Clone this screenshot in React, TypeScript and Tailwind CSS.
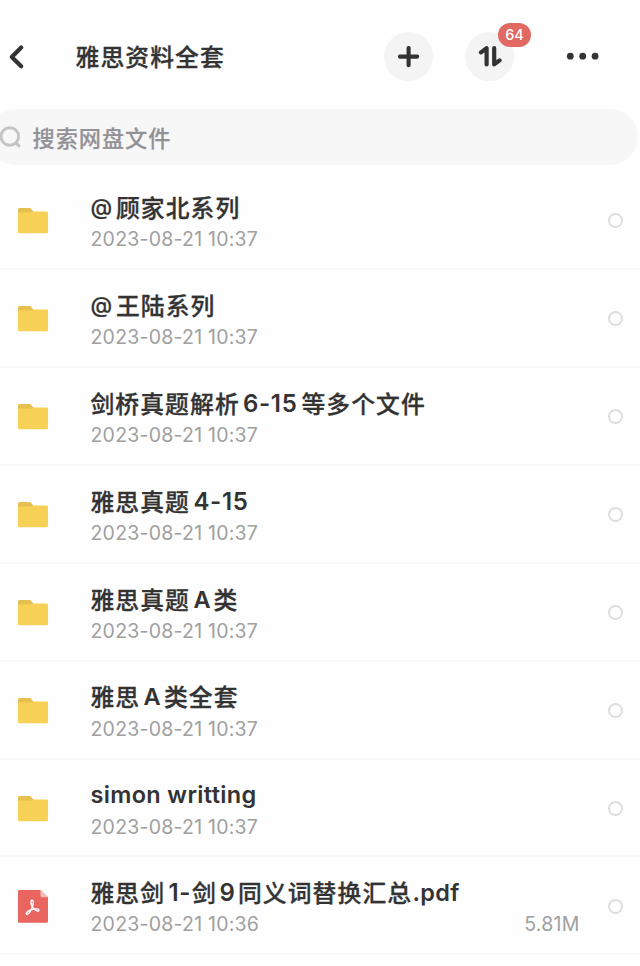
import React from "react";

type Run = { t: string; cjk?: boolean; at?: boolean; digits?: boolean; w: number };
type Item = { runs: Run[]; date: string; size?: string; pdf?: boolean };

const D = "2023-08-21 10:37";

const items: Item[] = [
  { runs: [{ t: "@", at: true, w: 25.5 }, { t: "顾家北系列", cjk: true, w: 126 }], date: D },
  { runs: [{ t: "@", at: true, w: 25.5 }, { t: "王陆系列", cjk: true, w: 101 }], date: D },
  {
    runs: [
      { t: "剑桥真题解析", cjk: true, w: 152.5 },
      { t: "6-15", digits: true, w: 58.5 },
      { t: "等多个文件", cjk: true, w: 126 },
    ],
    date: D,
  },
  { runs: [{ t: "雅思真题", cjk: true, w: 103 }, { t: "4-15", digits: true, w: 56 }], date: D },
  {
    runs: [
      { t: "雅思真题", cjk: true, w: 103 },
      { t: "A", w: 20 },
      { t: "类", cjk: true, w: 25 },
    ],
    date: D,
  },
  {
    runs: [
      { t: "雅思", cjk: true, w: 53 },
      { t: "A", w: 20.5 },
      { t: "类全套", cjk: true, w: 76 },
    ],
    date: D,
  },
  { runs: [{ t: "simon writting", w: 170 }], date: D },
  {
    runs: [
      { t: "雅思剑", cjk: true, w: 78 },
      { t: "1-", digits: true, w: 23.5 },
      { t: "剑", cjk: true, w: 27.5 },
      { t: "9", digits: true, w: 18.5 },
      { t: "同义词替换汇总", cjk: true, w: 174.5 },
      { t: ".pdf", w: 50 },
    ],
    date: "2023-08-21 10:36",
    size: "5.81M",
    pdf: true,
  },
];

function FolderIcon() {
  return (
    <svg width="30" height="26" viewBox="0 0 30 26">
      <path d="M0 10V1.5Q0 0 1.5 0H11.5Q12.5 0 13.2 .8L16.5 5V10Z" fill="#e6bf50" />
      <path d="M0 5.4Q0 4.6 1 4.6H12.5Q13.3 4.6 13.9 4L14.5 3.4H28.7Q30 3.4 30 4.7V24Q30 25.3 28.7 25.3H1.3Q0 25.3 0 24Z" fill="#f6d155" />
    </svg>
  );
}

function PdfIcon() {
  return (
    <svg width="30" height="33" viewBox="0 0 30 33">
      <path d="M1.3 0H22.5L30 7.2V31.4Q30 32.7 28.7 32.7H1.3Q0 32.7 0 31.4V1.3Q0 0 1.3 0Z" fill="#e9655f" />
      <path d="M22.5 0L30 7.2H23.6Q22.5 7.2 22.5 6.1Z" fill="#f5bcb8" />
      <path
        d="M14.2 17C12.8 13.5 12.4 10.3 14 10.3C15.7 10.3 15.6 14 14.3 17.1C13 20.5 10.6 24.7 8.8 24.5C7.2 23.9 9.6 21 12.5 20C15 19 20.9 18.1 21 20.2C20.9 22.4 16.4 20.2 14.2 17Z"
        fill="none"
        stroke="#fff"
        strokeWidth="1.4"
        strokeLinejoin="round"
      />
    </svg>
  );
}

function runClass(r: Run) {
  if (r.cjk)
    return "block -mt-[2px] font-['Noto_Sans_CJK_SC',sans-serif] text-[23.8px] leading-8 font-medium tracking-[1.1px] [-webkit-text-stroke:0.3px_#333]";
  if (r.at) return "block -mt-px font-['Inter',sans-serif] text-[22px] leading-8 font-medium [-webkit-text-stroke:0.2px_#333]";
  if (r.digits) return "block font-['Inter',sans-serif] text-[24px] leading-8 font-semibold tracking-[0.7px]";
  return "block font-['Inter',sans-serif] text-[23.5px] leading-8 font-semibold tracking-[0.35px]";
}

function Row({ item }: { item: Item }) {
  return (
    <li className="flex h-[97.9px] border-b-2 border-[#f8f8f8] pl-[18px]">
      <div className={item.pdf ? "w-[73px] pt-[32.4px]" : "w-[73px] pt-[36px]"}>
        {item.pdf ? <PdfIcon /> : <FolderIcon />}
      </div>
      <div className="flex-1 pt-[19.8px]">
        <div className="-ml-[0.6px] flex h-8 items-center whitespace-nowrap text-[#333]">
          {item.runs.map((r, i) => (
            <span key={i} className={runClass(r)} style={{ width: r.w }}>
              {r.t}
            </span>
          ))}
        </div>
        <div className="-ml-[0.5px] flex h-[31.6px] items-center justify-between font-['Inter',sans-serif] text-[19.5px] tracking-[0.22px] text-[#a0a0a0]">
          <span>{item.date}</span>
          <span>{item.size}</span>
        </div>
      </div>
      <div className="flex w-[60.5px] justify-end pt-[41.2px] pr-[17px]">
        <div className="size-[15px] rounded-full border-2 border-[#dedede]" />
      </div>
    </li>
  );
}

export default function App() {
  return (
    <main className="h-[966px] w-[640px] overflow-hidden bg-[#fefefe]">
      <header className="flex h-[109px] items-start">
        <svg className="mt-[44px] ml-[8px] shrink-0" width="18" height="26" viewBox="0 0 18 26">
          <path d="M13.2 3.5L3.8 13L13.2 22.3" fill="none" stroke="#333" strokeWidth="4.2" strokeLinecap="round" strokeLinejoin="round" />
        </svg>
        <h1 className="mt-[40px] ml-[49.5px] w-[308.5px] font-['Noto_Sans_CJK_SC',sans-serif] text-[23.8px] leading-8 font-medium tracking-[1.1px] text-[#333] [-webkit-text-stroke:0.3px_#333]">
          雅思资料全套
        </h1>
        <button className="mt-[32px] flex size-[49px] items-center justify-center rounded-full bg-[#f4f4f4]">
          <svg width="22" height="22" viewBox="0 0 22 22">
            <path d="M10.6 2V19.2M2 10.6H19.2" stroke="#333" strokeWidth="4.1" strokeLinecap="round" />
          </svg>
        </button>
        <button className="relative mt-[32px] ml-[32px] flex size-[49px] items-center justify-center rounded-full bg-[#f4f4f4]">
          <svg width="24" height="22" viewBox="0 0 24 22">
            <path d="M3 6.4L8.6 2.2V18.4M16.2 2.2V18.4L21.6 14.4" fill="none" stroke="#333" strokeWidth="4.2" strokeLinecap="round" strokeLinejoin="round" />
          </svg>
          <span className="absolute top-[-9px] left-[33px] flex h-[24px] w-[33px] items-center justify-center rounded-full bg-[#e16962] font-['Inter',sans-serif] text-[14.5px] font-medium text-white">
            64
          </span>
        </button>
        <svg className="mt-[52px] ml-[52px]" width="34" height="8" viewBox="0 0 34 8">
          <circle cx="4.3" cy="4.2" r="3.4" fill="#333" />
          <circle cx="16.7" cy="4.2" r="3.4" fill="#333" />
          <circle cx="29.1" cy="4.2" r="3.4" fill="#333" />
        </svg>
      </header>
      <div className="-ml-[12px] flex h-[56px] w-[650px] items-center rounded-full bg-[#f7f7f7] pl-[11px]">
        <svg width="24" height="24" viewBox="0 0 24 24" fill="none" stroke="#c4c4c4" strokeWidth="2.9" strokeLinecap="round">
          <circle cx="10.8" cy="11.5" r="8.8" />
          <path d="M17.2 18.2L20 20.9" />
        </svg>
        <span className="ml-[9.5px] font-['Noto_Sans_CJK_SC',sans-serif] text-[22.2px] leading-8 font-medium tracking-[0.95px] text-[#929296] [-webkit-text-stroke:0.2px_#929296]">
          搜索网盘文件
        </span>
      </div>
      <ul className="pt-[7.2px]">
        {items.map((it, i) => (
          <Row key={i} item={it} />
        ))}
      </ul>
    </main>
  );
}
